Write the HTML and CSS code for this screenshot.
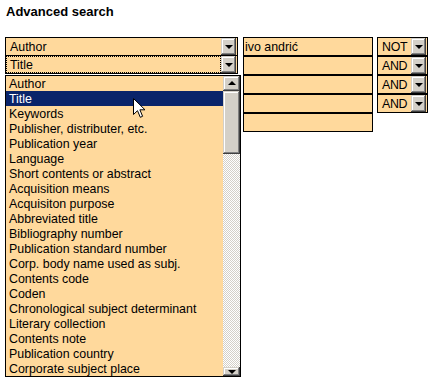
FILE: index.html
```html
<!DOCTYPE html>
<html>
<head>
<meta charset="utf-8">
<link rel="stylesheet" href="styles.css">
</head>
<body>
<h1 class="title">Advanced search</h1>
<div class="form">
  <div class="col-fields">
    <div class="sel"><span class="sel-text">Author</span><span class="btn"><i class="tri"></i></span></div>
    <div class="sel"><span class="sel-text focus">Title</span><span class="btn"><i class="tri"></i></span></div>
  </div>
  <div class="col-inputs">
    <div class="inp">ivo andrić</div>
    <div class="inp"></div>
    <div class="inp"></div>
    <div class="inp"></div>
    <div class="inp"></div>
  </div>
  <div class="col-ops">
    <div class="sel op"><span class="sel-text">NOT</span><span class="btn"><i class="tri"></i></span></div>
    <div class="sel op"><span class="sel-text">AND</span><span class="btn"><i class="tri"></i></span></div>
    <div class="sel op"><span class="sel-text">AND</span><span class="btn"><i class="tri"></i></span></div>
    <div class="sel op"><span class="sel-text">AND</span><span class="btn"><i class="tri"></i></span></div>
  </div>
</div>
<div class="list">
  <ul class="items">
    <li>Author</li>
    <li class="hl">Title</li>
    <li>Keywords</li>
    <li>Publisher, distributer, etc.</li>
    <li>Publication year</li>
    <li>Language</li>
    <li>Short contents or abstract</li>
    <li>Acquisition means</li>
    <li>Acquisiton purpose</li>
    <li>Abbreviated title</li>
    <li>Bibliography number</li>
    <li>Publication standard number</li>
    <li>Corp. body name used as subj.</li>
    <li>Contents code</li>
    <li>Coden</li>
    <li>Chronological subject determinant</li>
    <li>Literary collection</li>
    <li>Contents note</li>
    <li>Publication country</li>
    <li>Corporate subject place</li>
  </ul>
  <div class="sb">
    <div class="sb-btn up"><i class="tri tri-up"></i></div>
    <div class="sb-thumb"></div>
    <div class="sb-track"></div>
    <div class="sb-btn down"><i class="tri"></i></div>
  </div>
</div>
<svg class="cursor" width="13" height="21" viewBox="0 0 13 21">
  <path d="M0.5 0.5 L0.5 16.5 L4.5 12.7 L7.3 19.3 L9.6 18.3 L6.9 11.8 L12 11.8 Z" fill="#fff" stroke="#000" stroke-width="1"/>
</svg>
</body>
</html>
```
FILE: styles.css
```css
* { box-sizing: border-box; }
body {
  margin: 0;
  background: #fff;
  font-family: "Liberation Sans", Arial, sans-serif;
  font-size: 12.4px;
  color: #000;
  position: relative;
  width: 439px;
  height: 380px;
  overflow: hidden;
}
.title {
  margin: 0;
  padding: 4px 0 0 6px;
  font-size: 13px;
  font-weight: bold;
  line-height: 16px;
  height: 37px;
}
.form {
  display: flex;
  padding-left: 5px;
}
.col-fields { width: 233px; display: flex; flex-direction: column; }
.col-inputs { width: 130px; margin-left: 5px; display: flex; flex-direction: column; }
.col-ops { width: 51px; margin-left: 4px; display: flex; flex-direction: column; }

.sel {
  height: 19px;
  border: 1px solid #000;
  background: #ffd99c;
  display: flex;
  align-items: stretch;
}
.col-fields .sel + .sel { margin-top: -1px; }
.sel-text {
  flex: 1;
  padding-left: 4px;
  line-height: 18px;
  white-space: nowrap;
}
.sel-text.focus {
  border: 1px dotted #000;
  line-height: 16px;
  padding-left: 3px;
}
.op .sel-text { padding-left: 4px; letter-spacing: -0.3px; }
.btn {
  width: 15px;
  background: #d4d0c8;
  box-shadow: inset -1px -1px #404040, inset 1px 1px #d4d0c8, inset -2px -2px #808080, inset 2px 2px #fff;
  display: flex;
  align-items: center;
  justify-content: center;
  margin: 0 1px 0 0;
}
.tri {
  width: 0;
  height: 0;
  border-left: 4px solid transparent;
  border-right: 4px solid transparent;
  border-top: 4px solid #000;
  margin-top: 1px;
}
.tri-up {
  border-top: none;
  border-bottom: 4px solid #000;
  margin-top: -1px;
}

.inp {
  height: 19px;
  border: 1px solid #000;
  background: #ffd99c;
  padding-left: 1px;
  line-height: 18px;
}

.list {
  position: absolute;
  left: 5px;
  top: 75px;
  width: 236px;
  height: 302px;
  border: 1px solid #000;
  background: #ffd99c;
  display: flex;
}
.items {
  list-style: none;
  margin: 0;
  padding: 0;
  flex: 1;
}
.items li {
  height: 15px;
  line-height: 16px;
  padding-left: 3px;
  white-space: nowrap;
}
.items li.hl {
  background: #0a246a;
  color: #fff;
}
.sb {
  width: 17px;
  display: flex;
  flex-direction: column;
}
.sb-btn {
  background: #d4d0c8;
  box-shadow: inset -1px -1px #404040, inset 1px 1px #d4d0c8, inset -2px -2px #808080, inset 2px 2px #fff;
  display: flex;
  align-items: center;
  justify-content: center;
}
.sb-btn.up { height: 15px; }
.sb-btn.down { height: 9px; }
.sb-thumb {
  height: 63px;
  background: #d4d0c8;
  box-shadow: inset -1px -1px #404040, inset 1px 1px #d4d0c8, inset -2px -2px #808080, inset 2px 2px #fff;
}
.sb-track {
  flex: 1;
  background: repeating-conic-gradient(#d4d0c8 0 25%, #fff 0 50%);
  background-size: 2px 2px;
}
.cursor {
  position: absolute;
  left: 133px;
  top: 98px;
}
```
